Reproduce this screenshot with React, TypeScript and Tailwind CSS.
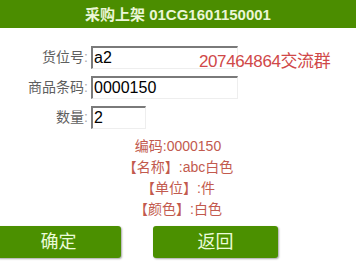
import React from 'react';

const FONT = '"Liberation Sans", "Noto Sans CJK SC", sans-serif';

const rows = [
  { label: '货位号', value: 'a2', width: 'w-[147px]' },
  { label: '商品条码', value: '0000150', width: 'w-[147px]' },
  { label: '数量', value: '2', width: 'w-[55px]' },
];

const info = ['编码:0000150', '【名称】:abc白色', '【单位】:件', '【颜色】:白色'];

export default function App() {
  return (
    <div className="relative w-[356px] h-[280px] overflow-hidden bg-white" style={{ fontFamily: FONT }}>
      <div className="h-[28px] bg-[#4b8d00] flex items-end justify-center pb-[2px]">
        <span className="text-[15px] font-bold text-[#eaf6d6] leading-[22px]">采购上架 01CG1601150001</span>
      </div>

      <div className="pt-[18px] flex flex-col gap-[7px]">
        {rows.map((row) => (
          <div key={row.label} className="flex items-center h-[23px]">
            <span className="w-[91px] pr-[3px] text-right text-[14px] text-[#5f5f5f] whitespace-nowrap">
              {row.label}
              <span className="text-[#aaa]">:</span>
            </span>
            <div
              className={`${row.width} h-[23px] border-t-2 border-l-2 border-t-[#7a7a7a] border-l-[#7a7a7a] border-r border-b border-r-[#eee] border-b-[#eee] px-[1px] text-[16px] leading-[20px] text-black`}
            >
              {row.value}
            </div>
          </div>
        ))}
      </div>

      <div className="absolute left-[199px] top-[51px] text-[17px] leading-[22px] text-[#d04848] whitespace-nowrap tracking-[-0.4px]">
        207464864交流群
      </div>

      <div className="mt-[7px] flex flex-col items-center text-[14px] leading-[21px] text-[#c25a4e]">
        {info.map((line) => (
          <div key={line}>{line}</div>
        ))}
      </div>

      <div className="mt-[6px] flex gap-[32px] ml-[-4px]">
        <button className="w-[125px] h-[32px] bg-[#4b9000] rounded-[3px] shadow-[1px_1px_2px_rgba(0,0,0,0.35)] text-[18px] text-[#eafbd8]">
          确定
        </button>
        <button className="w-[125px] h-[32px] bg-[#4b9000] rounded-[3px] shadow-[1px_1px_2px_rgba(0,0,0,0.35)] text-[18px] text-[#eafbd8]">
          返回
        </button>
      </div>
    </div>
  );
}
